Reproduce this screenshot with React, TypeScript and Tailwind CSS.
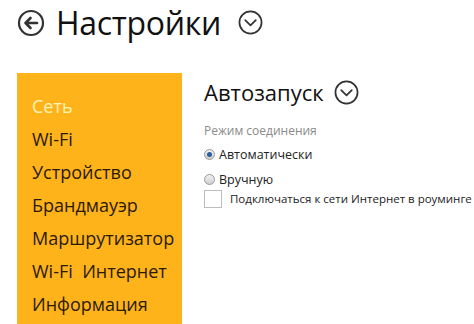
import React from "react";

const menu = [
  "Сеть",
  "Wi-Fi",
  "Устройство",
  "Брандмауэр",
  "Маршрутизатор",
  "Wi-Fi  Интернет",
  "Информация",
];

function BackIcon() {
  return (
    <svg width="28" height="28" viewBox="0 0 28 28" fill="none">
      <circle cx="14" cy="14" r="12" stroke="#333" strokeWidth="2.2" />
      <path d="M20 14H8.5M13.5 9l-5 5 5 5" stroke="#333" strokeWidth="2.6" strokeLinecap="round" strokeLinejoin="round" />
    </svg>
  );
}

function ChevronCircle({ size = 26 }: { size?: number }) {
  return (
    <svg width={size} height={size} viewBox="0 0 26 26" fill="none">
      <circle cx="13" cy="13" r="11.5" stroke="#333" strokeWidth="1.8" />
      <path d="M7.5 10.5l5.5 5.5 5.5-5.5" stroke="#333" strokeWidth="1.8" strokeLinecap="round" strokeLinejoin="round" />
    </svg>
  );
}

function Radio({ checked }: { checked?: boolean }) {
  return (
    <span className="w-[11px] h-[11px] rounded-full border border-[#9a9a9a] bg-gradient-to-b from-[#f2f2f2] to-[#cfcfcf] flex items-center justify-center">
      {checked && <span className="w-[5px] h-[5px] rounded-full bg-[#2a5f9e]" />}
    </span>
  );
}

export default function App() {
  return (
    <div
      className="w-[474px] h-[324px] bg-white overflow-hidden text-[#1a1a1a]"
      style={{ fontFamily: '"Open Sans", "Noto Sans", sans-serif' }}
    >
      <header className="flex items-center h-[44px] pl-[17px] pt-[2px]">
        <BackIcon />
        <h1 className="ml-[11px] text-[32px] leading-[40px] tracking-[-0.3px] text-[#111]">Настройки</h1>
        <span className="ml-[17px] mt-[-2px]">
          <ChevronCircle size={25} />
        </span>
      </header>
      <div className="flex mt-[29px]">
        <nav className="ml-[17px] w-[165px] h-[260px] bg-[#ffb31a] pt-[21px] pl-[15px] flex flex-col gap-[8px]">
          {menu.map((m, i) => (
            <div
              key={m}
              className={`text-[18px] leading-[25px] whitespace-pre ${i === 0 ? "text-[#fff3b8]" : "text-[#2a1a08]"}`}
            >
              {m}
            </div>
          ))}
        </nav>
        <section className="ml-[22px] pt-[4px]">
          <div className="flex items-center">
            <span className="text-[22px] leading-[30px] text-[#111]">Автозапуск</span>
            <span className="ml-[10px]">
              <ChevronCircle size={25} />
            </span>
          </div>
          <div className="mt-[16px] text-[12px] leading-[16px] text-[#8a8a8a]">Режим соединения</div>
          <div className="mt-[7px] flex items-center gap-[4px] text-[12.5px] leading-[17px] text-[#222]">
            <Radio checked />
            <span>Автоматически</span>
          </div>
          <div className="mt-[8px] flex items-center gap-[4px] text-[12.5px] leading-[17px] text-[#222]">
            <Radio />
            <span>Вручную</span>
          </div>
          <div className="mt-[2px] flex items-center">
            <span className="w-[18px] h-[18px] border border-[#bdbdbd] bg-white" />
            <span className="ml-[8px] text-[11.5px] leading-[16px] text-[#222]">
              Подключаться к сети Интернет в роуминге
            </span>
          </div>
        </section>
      </div>
    </div>
  );
}
